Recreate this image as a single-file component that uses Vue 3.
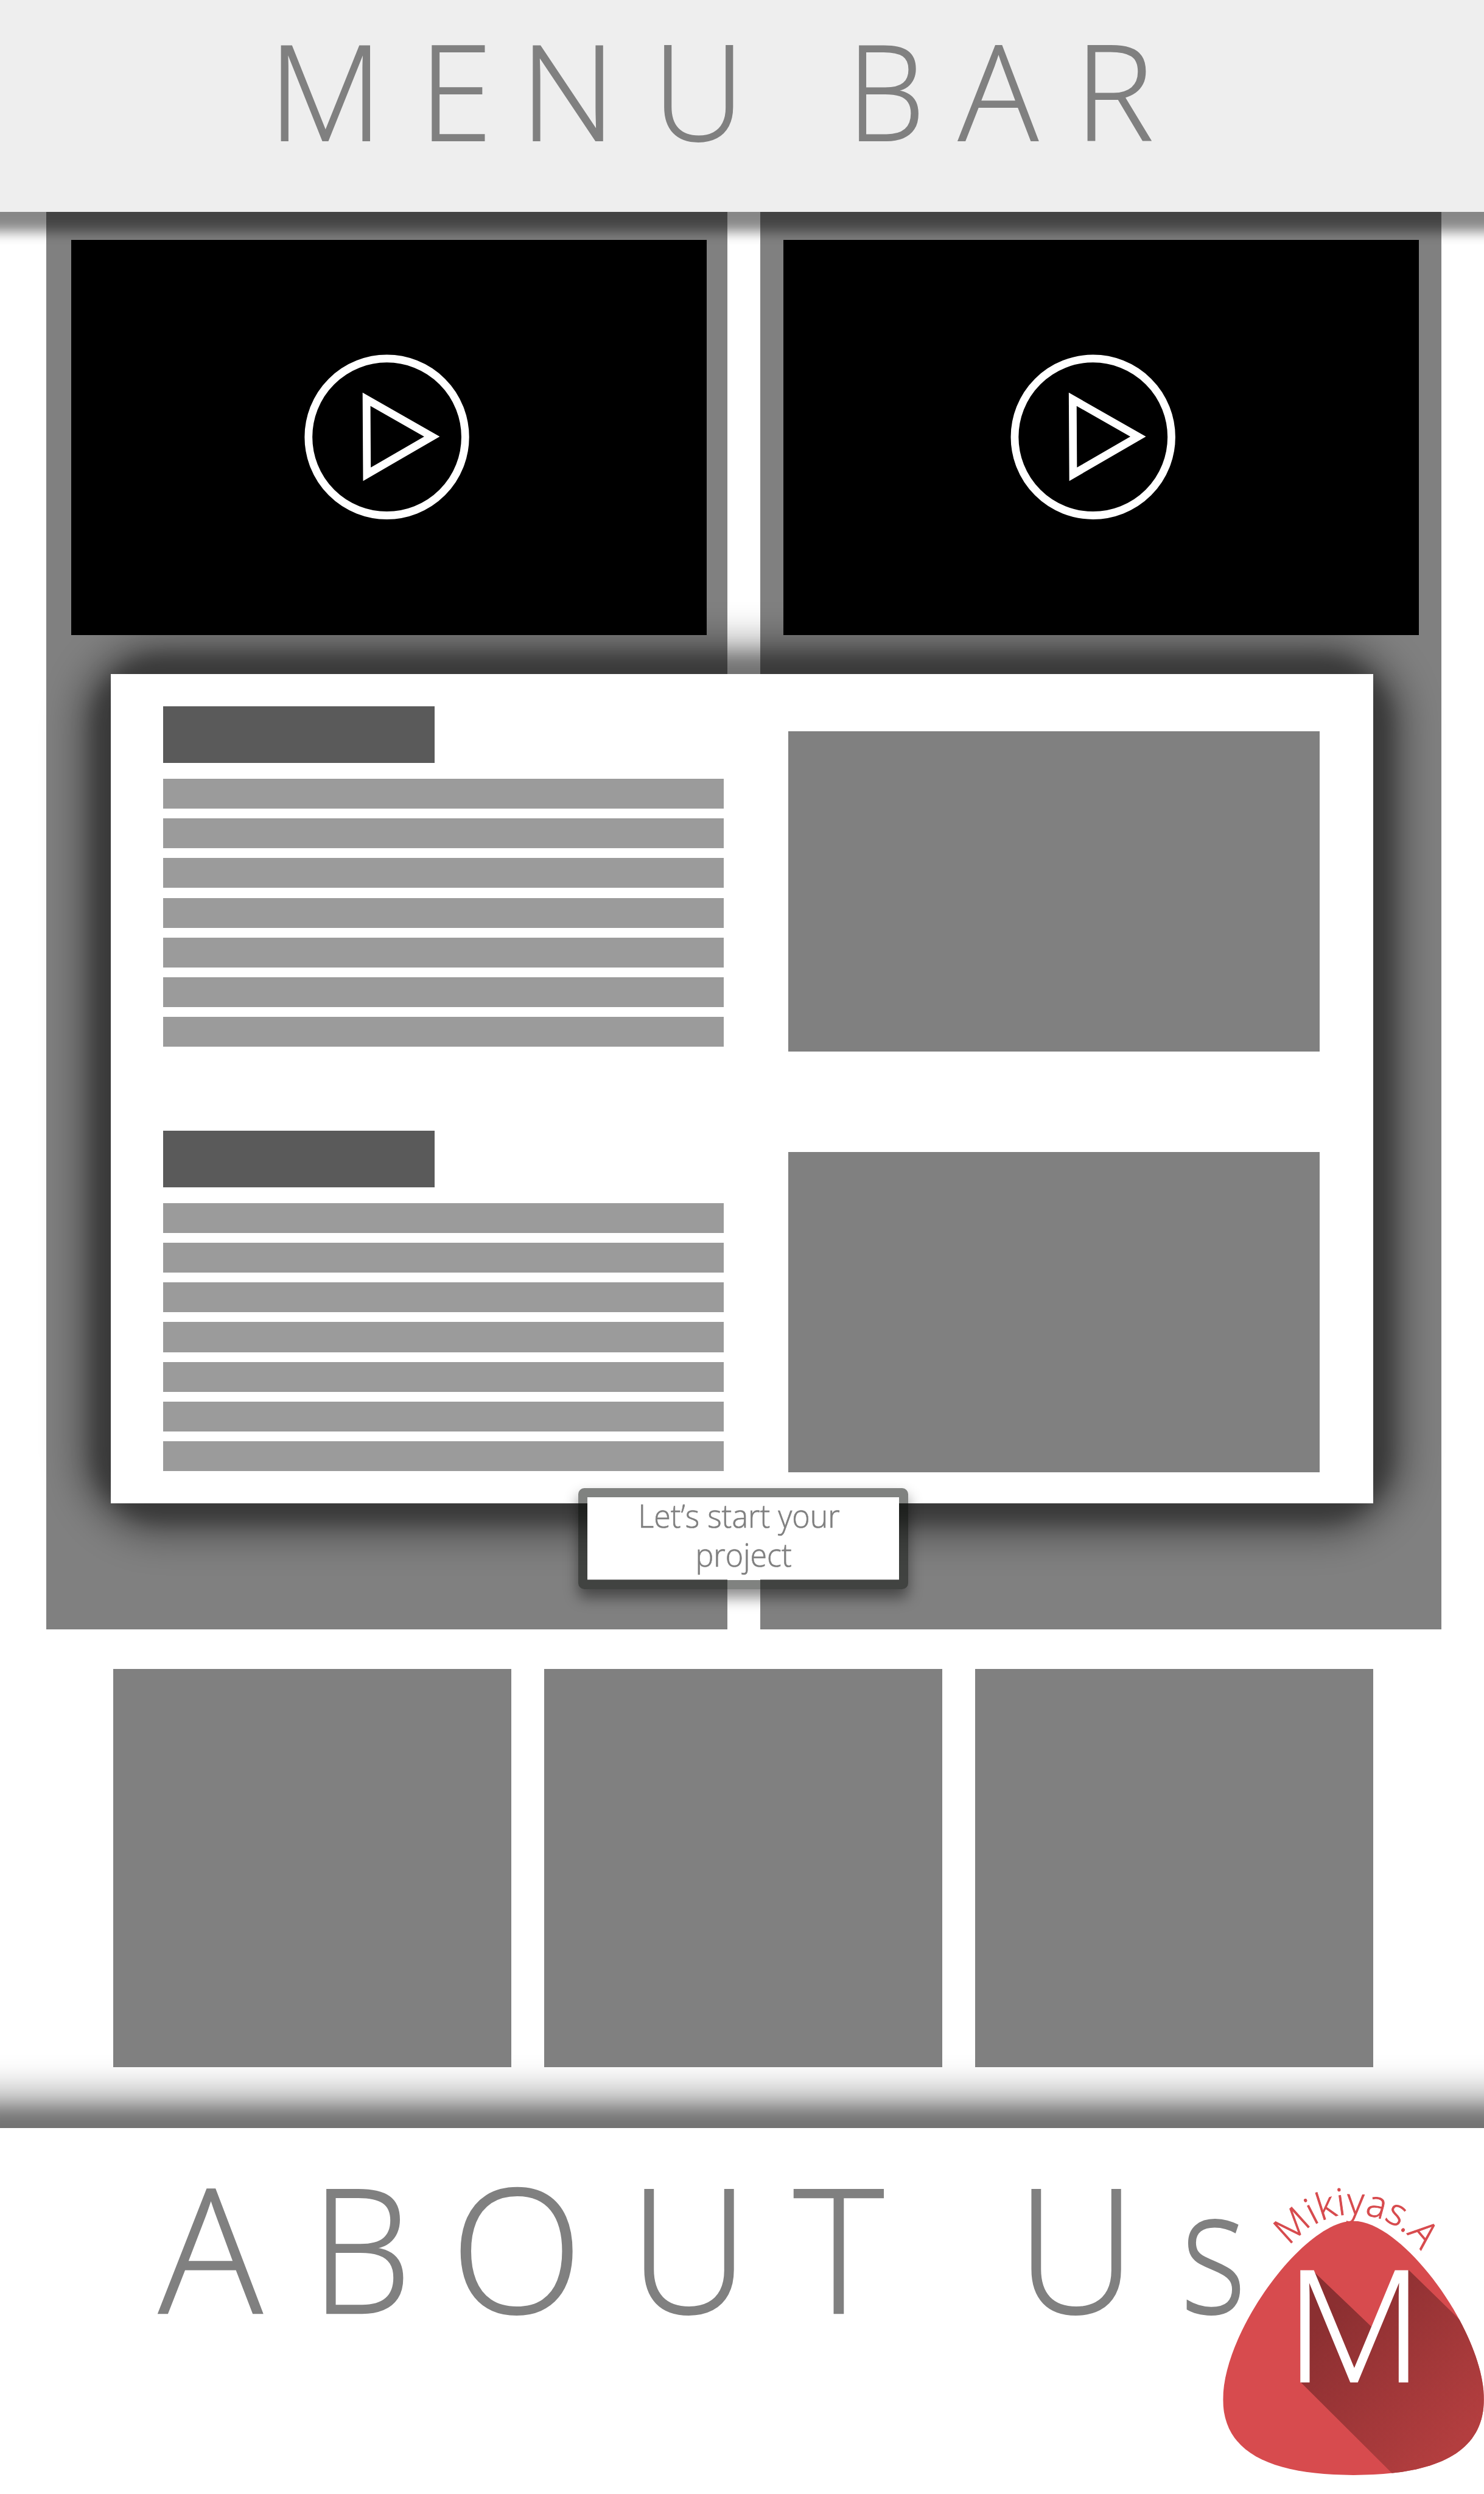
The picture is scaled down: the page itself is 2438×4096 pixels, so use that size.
<script setup>
const videos = [
  { id: 'left', iconX: 646.5 - 119 },
  { id: 'right', iconX: 1826.5 - 1309 }
]
const articles = [1, 2]
const lines = 7
const tiles = 3
</script>

<template>
  <div class="page">
    <header class="menu">
      <svg class="title" viewBox="0 0 2480 354" width="2480" height="354">
        <text class="menu-text" y="235"><tspan x="448 700 869">MEN</tspan><tspan x="1091" textLength="153" lengthAdjust="spacingAndGlyphs">U</tspan><tspan x="1280">&#32;</tspan><tspan x="1415.5" textLength="130" lengthAdjust="spacingAndGlyphs">B</tspan><tspan x="1601.4 1796">AR</tspan></text>
      </svg>
    </header>

    <section class="stage">
      <div class="panels">
        <div v-for="v in videos" :key="v.id" class="panel" :class="v.id">
          <svg class="video" viewBox="0 0 1062 660" width="1062" height="660">
            <g :transform="`translate(${v.iconX} 329.3)`" fill="none" stroke="#fff" stroke-width="13">
              <circle r="131" />
              <path d="M-34 -63L75.3 -.7L-33.3 62.2Z" stroke-miterlimit="10" />
            </g>
          </svg>
        </div>
      </div>

      <div class="card">
        <div v-for="a in articles" :key="a" class="article">
          <div class="copy">
            <div class="heading"></div>
            <div class="lines">
              <div v-for="l in lines" :key="l" class="line"></div>
            </div>
          </div>
          <div class="image"></div>
        </div>
      </div>

      <button class="cta">
        <svg viewBox="0 0 520 137" width="520" height="137">
          <text x="85" y="50" textLength="337" lengthAdjust="spacingAndGlyphs">Let’s start your</text>
          <text x="180.5" y="115" textLength="161" lengthAdjust="spacingAndGlyphs">project</text>
        </svg>
      </button>
    </section>

    <section class="tiles">
      <div v-for="t in tiles" :key="t" class="tile"></div>
    </section>

    <footer class="about">
      <svg class="title" viewBox="0 0 2480 611" width="2480" height="611">
        <text class="about-text" y="309.2"><tspan x="265">A</tspan><tspan x="519.5" textLength="168" lengthAdjust="spacingAndGlyphs">B</tspan><tspan x="753">O</tspan><tspan x="1052" textLength="199" lengthAdjust="spacingAndGlyphs">U</tspan><tspan x="1326 1500">T </tspan><tspan x="1699" textLength="199" lengthAdjust="spacingAndGlyphs">U</tspan><tspan x="1974" textLength="108" lengthAdjust="spacingAndGlyphs">s</tspan></text>
      </svg>
      <svg class="logo" viewBox="0 0 480 546" width="480" height="546">
        <defs>
          <clipPath id="blob">
            <path d="M262 90C345 90 480 275 480 388C480 480 395 514.6 262 514.6C129 514.6 44 480 44 388C44 275 179 90 262 90Z" />
          </clipPath>
          <linearGradient id="shade" gradientUnits="userSpaceOnUse" x1="200" y1="260" x2="420" y2="480">
            <stop offset="0" stop-color="#8b2f31" />
            <stop offset="1" stop-color="#b33e3f" />
          </linearGradient>
          <path id="arc" d="M129.5 211.5A132.5 132.5 0 0 1 394.5 211.5" />
        </defs>
        <g clip-path="url(#blob)">
          <rect width="480" height="546" fill="#d74b4e" />
          <path d="M194.3 173.4L292 266.7L334 173.4L355 172.7L436.7 252.4L500 314V560H375L173.3 359V173.4Z" fill="url(#shade)" />
        </g>
        <text class="initial" x="147.5" y="358.5" textLength="232" lengthAdjust="spacingAndGlyphs">M</text>
        <text class="name"><textPath href="#arc" startOffset="84" textLength="257">Mikiyas.A</textPath></text>
      </svg>
    </footer>
  </div>
</template>

<style>
body {
  margin: 0;
  background: #fff;
  overflow: hidden;
}
</style>

<style scoped>
.page {
  zoom: 0.983065;
  width: 2480px;
  height: 4166px;
  overflow: hidden;
  background: #fff;
  font-family: "Open Sans", "Noto Sans", sans-serif;
  font-weight: 300;
}
svg {
  display: block;
  overflow: visible;
}
.menu {
  position: relative;
  z-index: 3;
  height: 354px;
  background: #eee;
  box-shadow: 0 -6px 20px 40px rgba(0, 0, 0, 0.475);
}
.menu-text {
  font-size: 222.5px;
  fill: #808080;
  stroke: #808080;
  stroke-width: 1.8px;
}
.stage {
  display: grid;
  height: 2368px;
}
.stage > * {
  grid-area: 1 / 1;
}
.panels {
  display: flex;
  justify-content: space-between;
  margin: 0 71px 0 77px;
}
.panel {
  box-sizing: border-box;
  width: 1139px;
  padding-top: 47px;
  background: #808080;
}
.panel.left {
  padding-left: 42px;
}
.panel.right {
  padding-left: 39px;
}
.video {
  background: #000;
}
.card {
  position: relative;
  z-index: 1;
  box-sizing: border-box;
  width: 2110px;
  height: 1386px;
  margin: 772px 0 0 185px;
  padding: 54px 90px 0 88px;
  background: #fff;
}
.card::before {
  content: "";
  position: absolute;
  z-index: -1;
  inset: 0;
  border-radius: 85px;
  box-shadow: 0 0 30px 33px rgba(0, 0, 0, 0.36), 0 0 56px 62px rgba(0, 0, 0, 0.3);
}
.card::after {
  content: "";
  position: absolute;
  z-index: -1;
  inset: 0;
  background: #fff;
}
.article {
  display: flex;
  justify-content: space-between;
  height: 709px;
}
.heading {
  width: 453px;
  height: 95px;
  margin-bottom: 26px;
  background: #5a5a5a;
}
.lines {
  display: flex;
  flex-direction: column;
  gap: 16.33px;
}
.line {
  width: 936px;
  height: 50px;
  background: #9b9b9b;
}
.image {
  width: 888px;
  height: 535px;
  margin-top: 42px;
  background: #808080;
}
.article + .article .image {
  margin-top: 36px;
}
.cta {
  position: relative;
  z-index: 2;
  width: 520px;
  height: 137px;
  margin: 2148px 0 0 982px;
  padding: 0;
  border: 0;
  background: #fff;
  font: inherit;
}
.cta::before {
  content: "";
  position: absolute;
  z-index: -1;
  inset: -16px;
  border: 16px solid rgba(1, 5, 2, 0.5);
  border-radius: 10px;
  box-shadow: 0 14px 24px rgba(0, 0, 0, 0.45);
}
.cta text {
  font-size: 53.5px;
  fill: #808080;
  stroke: #808080;
  stroke-width: 0.7px;
}
.tiles {
  display: flex;
  gap: 55.5px;
  height: 701px;
  padding: 66px 0 66px 189px;
}
.tile {
  position: relative;
  z-index: 2;
  width: 665px;
  height: 665px;
  background: #808080;
}
.about {
  position: relative;
  z-index: 1;
  height: 611px;
  background: #fff;
  box-shadow: 0 0 28px 34px rgba(0, 0, 0, 0.36), 0 0 50px 65px rgba(0, 0, 0, 0.3);
}
.about-text {
  font-size: 289px;
  fill: #808080;
  stroke: #808080;
  stroke-width: 2.4px;
}
.logo {
  position: absolute;
  top: 65px;
  right: 0;
}
.initial {
  font-size: 259px;
  fill: #fff;
  stroke: #fff;
  stroke-width: 2.6px;
}
.name {
  font-size: 62px;
  fill: #d74b4e;
  stroke: #d74b4e;
  stroke-width: 1px;
}
</style>
